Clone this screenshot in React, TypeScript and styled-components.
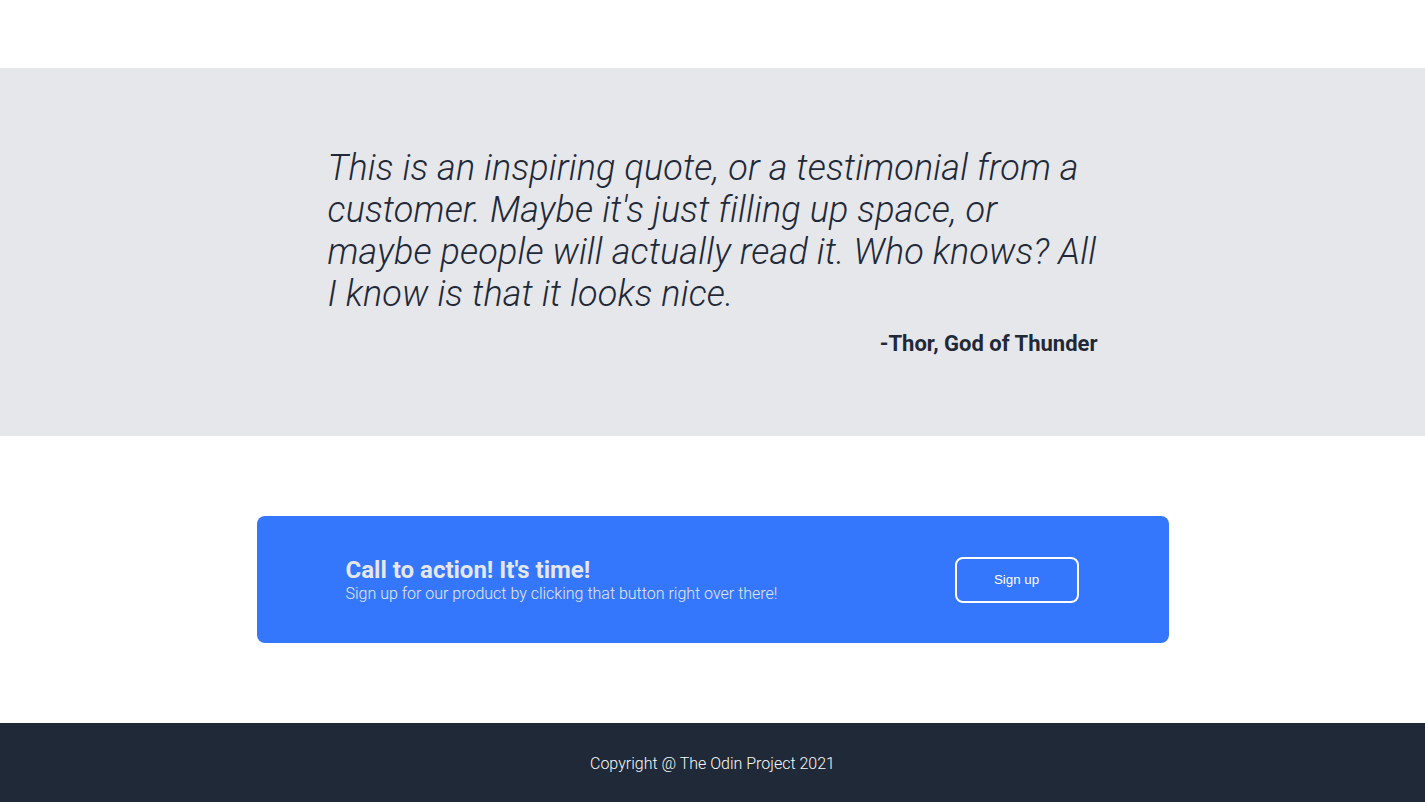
import styled, { createGlobalStyle } from "styled-components";

const GlobalStyle = createGlobalStyle`
  * {
    box-sizing: border-box;
  }
  body {
    margin: 0;
    font-family: Roboto, "Liberation Sans", sans-serif;
    background: #fff;
  }
`;

const Page = styled.div`
  width: 100%;
  padding-top: 68px;
`;

const QuoteSection = styled.section`
  background-color: #e5e7eb;
  padding: 79px 0 80px;
`;

const QuoteWrapper = styled.div`
  width: 770px;
  margin: 0 auto;
  display: flex;
  flex-direction: column;
  gap: 16px;
`;

const Quote = styled.p`
  margin: 0;
  font-size: 36px;
  line-height: 42px;
  font-weight: 300;
  font-style: italic;
  letter-spacing: 0.14px;
  color: #1f2937;
`;

const Author = styled.p`
  margin: 0;
  align-self: flex-end;
  font-size: 22px;
  font-weight: 700;
  color: #1f2937;
`;

const CtaSection = styled.section`
  padding: 80px 0;
`;

const CtaBox = styled.div`
  width: 912px;
  height: 127px;
  margin: 0 auto;
  padding: 0 90px 0 89px;
  background-color: #3477fd;
  border-radius: 8px;
  display: flex;
  align-items: center;
  justify-content: space-between;
`;

const CtaText = styled.div`
  display: flex;
  flex-direction: column;
`;

const CtaTitle = styled.h2`
  margin: 0;
  font-size: 24px;
  line-height: 28px;
  font-weight: 700;
  color: #e5e7eb;
`;

const CtaSubtitle = styled.p`
  margin: 0;
  font-size: 16px;
  line-height: 19px;
  font-weight: 300;
  color: #e5e7eb;
`;

const Button = styled.button`
  width: 124px;
  height: 46px;
  background: transparent;
  border: 2px solid #fff;
  border-radius: 8px;
  color: #fff;
  font-family: "Liberation Sans", Arial, sans-serif;
  font-size: 13.33px;
  cursor: pointer;
`;

const Footer = styled.footer`
  height: 79px;
  background-color: #1f2937;
  display: flex;
  align-items: center;
  justify-content: center;
  padding-top: 2px;
`;

const FooterText = styled.p`
  margin: 0;
  font-size: 16px;
  font-weight: 300;
  color: #f9faf8;
`;

const App = () => {
  return (
    <>
      <GlobalStyle />
      <Page>
        <QuoteSection>
          <QuoteWrapper>
            <Quote>
              This is an inspiring quote, or a testimonial from a customer. Maybe
              it's just filling up space, or maybe people will actually read it.
              Who knows? All I know is that it looks nice.
            </Quote>
            <Author>-Thor, God of Thunder</Author>
          </QuoteWrapper>
        </QuoteSection>
        <CtaSection>
          <CtaBox>
            <CtaText>
              <CtaTitle>Call to action! It's time!</CtaTitle>
              <CtaSubtitle>
                Sign up for our product by clicking that button right over there!
              </CtaSubtitle>
            </CtaText>
            <Button>Sign up</Button>
          </CtaBox>
        </CtaSection>
        <Footer>
          <FooterText>Copyright @ The Odin Project 2021</FooterText>
        </Footer>
      </Page>
    </>
  );
};

export default App;
